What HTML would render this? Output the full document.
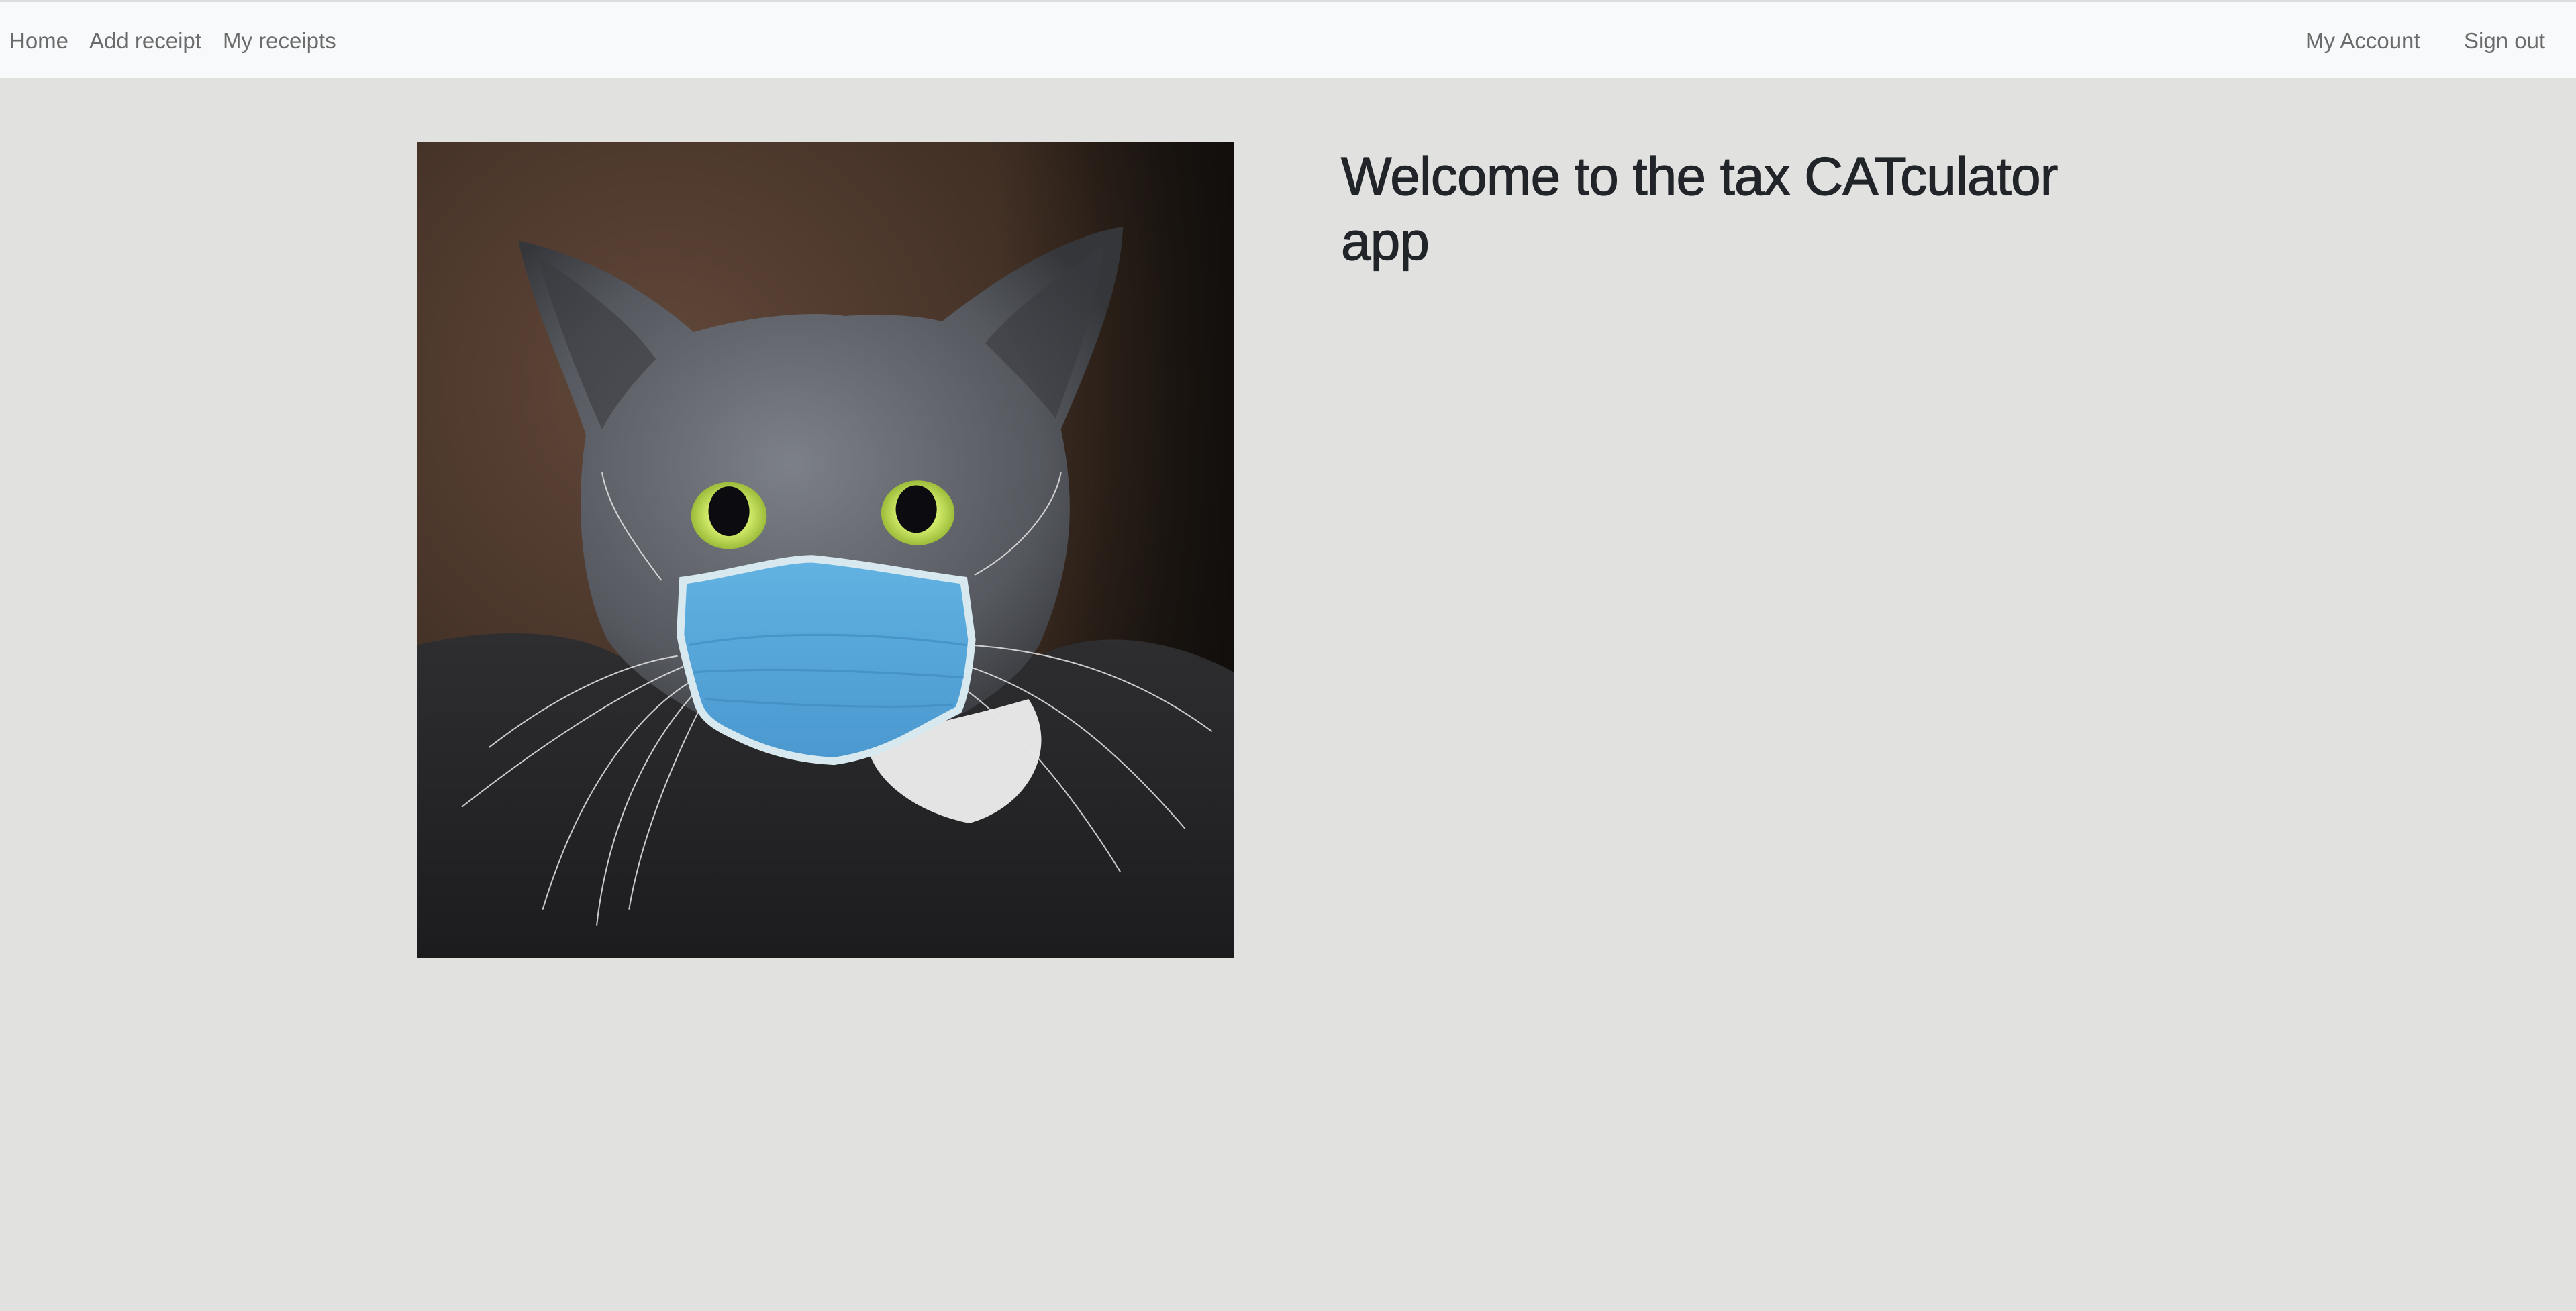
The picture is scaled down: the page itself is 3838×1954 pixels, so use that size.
<!DOCTYPE html>
<html><head><meta charset="utf-8"><style>
html,body{margin:0;padding:0;}
body{width:3838px;height:1954px;background:#e1e1df;position:relative;overflow:hidden;font-family:"Liberation Sans",sans-serif;}
.topline{position:absolute;left:0;top:0;width:3838px;height:3px;background:#dcdcdc;}
.nav{position:absolute;left:0;top:3px;width:3838px;height:113px;background:#f8f9fa;}
.nl{position:absolute;top:44px;font-size:33px;line-height:33px;color:#6b6b6b;white-space:nowrap;}
h1{position:absolute;left:1998px;top:214px;margin:0;font-size:80px;line-height:97px;font-weight:normal;color:#212529;white-space:nowrap;letter-spacing:-0.8px;-webkit-text-stroke:1.2px #212529;}
svg{position:absolute;left:622px;top:212px;}
</style></head><body>
<div class="topline"></div>
<div class="nav"></div>
<span class="nl" style="left:14px">Home</span>
<span class="nl" style="left:133px">Add receipt</span>
<span class="nl" style="left:332px">My receipts</span>
<span class="nl" style="left:3435px">My Account</span>
<span class="nl" style="left:3671px">Sign out</span>
<h1>Welcome to the tax CATculator<br>app</h1>
<svg width="1216" height="1216" viewBox="28 28 1512 1512" preserveAspectRatio="none">
<defs>
<radialGradient id="bg" cx="0.3" cy="0.3" r="0.9">
<stop offset="0" stop-color="#62483a"/><stop offset="0.6" stop-color="#3e2d22"/><stop offset="1" stop-color="#0e0c0a"/>
</radialGradient>
<linearGradient id="rs" x1="0" y1="0" x2="1" y2="0">
<stop offset="0" stop-color="#0e0c0a" stop-opacity="0"/><stop offset="1" stop-color="#0e0c0a" stop-opacity="0.85"/>
</linearGradient>
<radialGradient id="head" cx="0.45" cy="0.45" r="0.6">
<stop offset="0" stop-color="#7c8087"/><stop offset="0.7" stop-color="#55585e"/><stop offset="1" stop-color="#34363a"/>
</radialGradient>
<linearGradient id="body" x1="0" y1="0" x2="0" y2="1">
<stop offset="0" stop-color="#2e2e30"/><stop offset="1" stop-color="#1c1c1e"/>
</linearGradient>
<radialGradient id="eye" cx="0.5" cy="0.5" r="0.5">
<stop offset="0.5" stop-color="#d8ef70"/><stop offset="1" stop-color="#9cbc3a"/>
</radialGradient>
<linearGradient id="mask" x1="0" y1="0" x2="0" y2="1">
<stop offset="0" stop-color="#62b2e2"/><stop offset="1" stop-color="#4a98cf"/>
</linearGradient>
</defs>
<rect x="28" y="28" width="1512" height="1512" fill="url(#bg)"/>
<rect x="1100" y="28" width="440" height="1512" fill="url(#rs)"/>
<path d="M28 960 C200 920 330 940 400 980 L1180 980 C1300 920 1450 960 1540 1010 L1540 1540 L28 1540 Z" fill="url(#body)"/>
<path d="M215 210 C350 240 460 310 540 380 C640 350 760 340 820 350 C900 345 960 350 1000 360 C1100 280 1230 200 1335 185 C1330 300 1280 420 1220 560 C1250 700 1240 820 1180 960 C1100 1090 900 1160 750 1160 C600 1130 440 1040 380 950 C330 850 320 700 340 570 C300 450 240 330 215 210 Z" fill="url(#head)"/>
<path d="M250 240 C330 290 420 360 470 430 C430 470 390 520 370 560 C320 450 280 340 250 240 Z" fill="#3a3b3f" opacity="0.6"/>
<path d="M1300 220 C1220 270 1130 340 1080 400 C1130 450 1180 500 1210 540 C1250 430 1290 320 1300 220 Z" fill="#3a3b3f" opacity="0.6"/>
<path d="M860 1140 C950 1110 1060 1090 1160 1060 C1220 1150 1160 1260 1050 1290 C950 1270 870 1210 860 1140 Z" fill="#e4e4e4"/>
<ellipse cx="605" cy="720" rx="70" ry="62" fill="url(#eye)"/>
<ellipse cx="605" cy="712" rx="38" ry="46" fill="#0c0c10"/>
<ellipse cx="955" cy="715" rx="68" ry="60" fill="url(#eye)"/>
<ellipse cx="952" cy="708" rx="38" ry="44" fill="#0c0c10"/>
<g stroke="#e8e8e8" stroke-width="2.5" fill="none" opacity="0.85">
<path d="M520 1000 C400 1050 250 1150 110 1260"/>
<path d="M530 1030 C420 1100 320 1250 260 1450"/>
<path d="M540 1050 C450 1150 380 1300 360 1480"/>
<path d="M510 980 C380 1000 250 1080 160 1150"/>
<path d="M550 1080 C490 1200 440 1330 420 1450"/>
<path d="M1050 960 C1200 970 1350 1010 1500 1120"/>
<path d="M1050 1000 C1200 1050 1320 1150 1450 1300"/>
<path d="M1040 1040 C1150 1120 1250 1250 1330 1380"/>
<path d="M480 840 C420 760 380 700 370 640"/>
<path d="M1060 830 C1150 780 1210 700 1220 640"/>
</g>
<path d="M520 840 C600 830 700 800 760 800 C860 810 960 830 1040 840 L1055 950 C1050 1010 1040 1060 1030 1080 C950 1120 900 1160 800 1175 C700 1170 640 1140 600 1120 C560 1100 550 1080 545 1060 C530 1010 518 960 515 940 Z" fill="url(#mask)" stroke="#d7e9ef" stroke-width="14"/>
<g stroke="#3f88bd" stroke-width="4" fill="none" opacity="0.6">
<path d="M530 960 C700 930 900 940 1045 960"/>
<path d="M540 1010 C700 1000 900 1010 1040 1020"/>
<path d="M560 1060 C700 1070 900 1080 1020 1070"/>
</g>
</svg>
</body></html>
